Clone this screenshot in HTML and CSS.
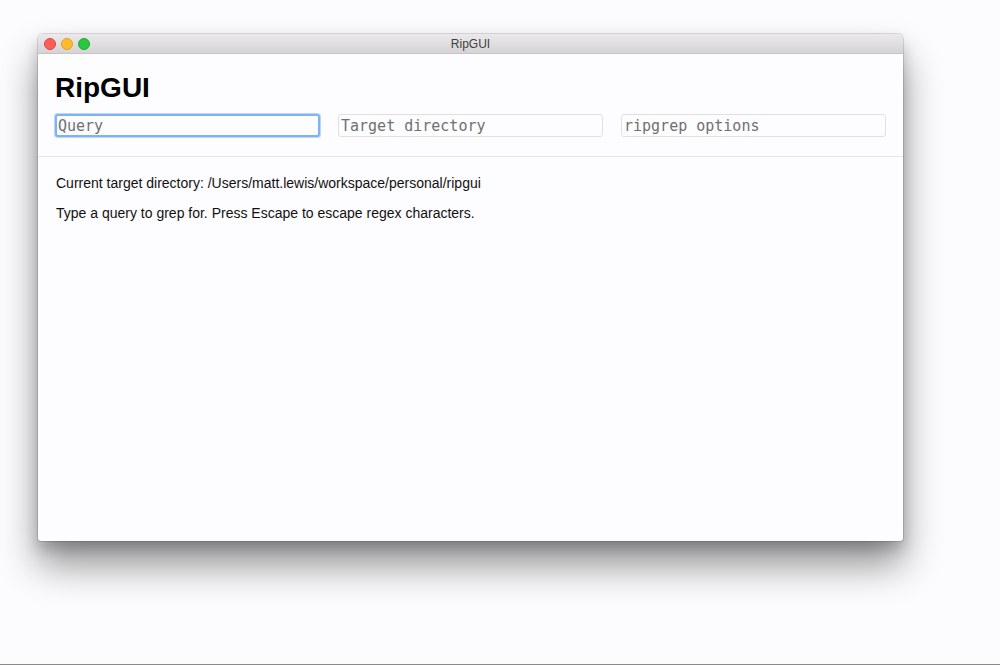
FILE: index.html
```html
<!DOCTYPE html>
<html>
<head>
<meta charset="utf-8">
<link rel="stylesheet" href="styles.css">
</head>
<body>
<div class="window">
  <div class="titlebar">
    <div class="lights">
      <span class="light red"></span>
      <span class="light yellow"></span>
      <span class="light green"></span>
    </div>
    <div class="title">RipGUI</div>
  </div>
  <div class="content">
    <header class="head">
      <h1 class="brand">RipGUI</h1>
      <div class="fields">
        <input class="field focused" type="text" placeholder="Query">
        <input class="field" type="text" placeholder="Target directory">
        <input class="field" type="text" placeholder="ripgrep options">
      </div>
    </header>
    <section class="info">
      <p class="line">Current target directory: /Users/matt.lewis/workspace/personal/ripgui</p>
      <p class="line">Type a query to grep for. Press Escape to escape regex characters.</p>
    </section>
  </div>
</div>
</body>
</html>
```

FILE: styles.css
```css
* { box-sizing: border-box; }
html, body { margin: 0; }
body {
  width: 1000px;
  height: 665px;
  background: #fcfbfd;
  border-bottom: 1px solid #8a8a8a;
  padding: 34px 0 0 38px;
  overflow: hidden;
  font-family: "Liberation Sans", Arial, sans-serif;
}
.window {
  width: 865px;
  height: 507px;
  background: #fdfcfe;
  border-radius: 5px 5px 3px 3px;
  box-shadow: 0 0 0 1px rgba(0,0,0,0.12), 0 24px 38px rgba(0,0,0,0.42), 0 8px 14px rgba(0,0,0,0.18);
  display: flex;
  flex-direction: column;
  overflow: hidden;
}
.titlebar {
  height: 20px;
  flex: none;
  position: relative;
  background: linear-gradient(#ebe9eb, #d5d3d5);
  border-bottom: 1px solid #c6c4c6;
  display: flex;
  align-items: center;
  justify-content: center;
}
.lights {
  position: absolute;
  left: 6px;
  top: 4px;
  display: flex;
  gap: 5px;
}
.light {
  width: 12px;
  height: 12px;
  border-radius: 50%;
  display: block;
}
.red { background: #fc5f57; border: 1px solid #e0443e; }
.yellow { background: #fdbc2e; border: 1px solid #dea123; }
.green { background: #29c840; border: 1px solid #1aab29; }
.title {
  font-size: 12px;
  color: #3f3f3f;
  line-height: 20px;
}
.content {
  flex: 1;
  display: flex;
  flex-direction: column;
}
.head {
  padding: 18px 17px 19px 17px;
  border-bottom: 1px solid #e6e5e7;
}
.brand {
  margin: 0 0 10px 0;
  font-size: 28px;
  line-height: 32px;
  font-weight: bold;
  color: #000;
}
.fields {
  display: flex;
  gap: 18px;
}
.field {
  flex: 1;
  min-width: 0;
  height: 23px;
  border: 1px solid #e1e0e2;
  border-radius: 3px;
  background: #fdfcfe;
  font-family: "DejaVu Sans Mono", "Liberation Mono", monospace;
  font-size: 15px;
  padding: 0 2px;
  color: #333;
  outline: none;
}
.field::placeholder { color: #707070; }
.field.focused {
  border: 2px solid #80b3f3;
  box-shadow: 0 0 0 1px #bcd6f8;
  padding: 0 1px;
}
.info {
  padding: 17px 18px;
}
.line {
  margin: 0 0 12px 0;
  font-size: 14px;
  line-height: 18px;
  color: #111;
}
```
